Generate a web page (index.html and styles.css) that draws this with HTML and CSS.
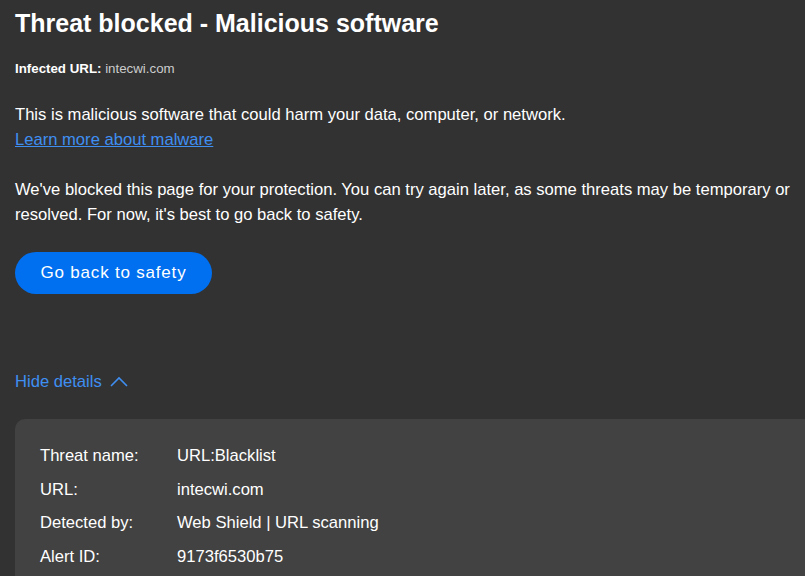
FILE: index.html
```html
<!DOCTYPE html>
<html lang="en">

<head>
    <meta charset="UTF-8">
    <meta name="viewport" content="width=device-width, initial-scale=1.0">
    <title>Threat blocked</title>
    <link rel="stylesheet" href="styles.css">
</head>

<body>
    <div class="main">
        <h1 class="title">Threat blocked - Malicious software</h1>

        <div class="infected">
            <b>Infected URL:</b> <span>intecwi.com</span>
        </div>

        <p class="text">
            This is malicious software that could harm your data, computer, or network.<br>
            <a href="#" class="learn">Learn more about malware</a>
        </p>

        <p class="text">
            We've blocked this page for your protection. You can try again later, as some threats may be temporary or
            resolved. For now, it's best to go back to safety.
        </p>

        <button class="back">Go back to safety</button>

        <a href="#" class="toggle">
            Hide details
            <svg width="18" height="12" viewBox="0 0 18 12">
                <path d="M1 10 L9 2 L17 10" fill="none" stroke="currentColor" stroke-width="1.6" />
            </svg>
        </a>

        <div class="details">
            <div class="row">
                <div class="label">Threat name:</div>
                <div class="value">URL:Blacklist</div>
            </div>
            <div class="row">
                <div class="label">URL:</div>
                <div class="value">intecwi.com</div>
            </div>
            <div class="row">
                <div class="label">Detected by:</div>
                <div class="value">Web Shield | URL scanning</div>
            </div>
            <div class="row">
                <div class="label">Alert ID:</div>
                <div class="value">9173f6530b75</div>
            </div>
        </div>
    </div>
</body>

</html>
```

FILE: styles.css
```css
html,
body {
    margin: 0;
    padding: 0;
}

:root {
    --bg: #323232;
    --panel: #424242;
    --blue: #0070f0;
    --link: #3f8ff2;
}

body {
    background: var(--bg);
    color: #ffffff;
    font-family: "Liberation Sans", Arial, sans-serif;
    height: 100vh;
    overflow: hidden;
}

.main {
    padding: 0 0 0 15px;
}

.title {
    margin: 0;
    padding-top: 6px;
    font-size: 25px;
    line-height: 34px;
    font-weight: bold;
}

.infected {
    margin-top: 21px;
    font-size: 13.3px;
    line-height: 16px;
}

.infected span {
    color: #cccccc;
}

.text {
    margin: 25px 0 0;
    font-size: 16.6px;
    line-height: 25px;
}

.learn {
    color: var(--link);
}

.back {
    margin-top: 25px;
    width: 197px;
    height: 42px;
    border: none;
    border-radius: 21px;
    background: var(--blue);
    color: #ffffff;
    font-family: inherit;
    font-size: 17px;
    letter-spacing: 0.8px;
    cursor: pointer;
}

.toggle {
    display: flex;
    align-items: center;
    margin-top: 77px;
    color: var(--link);
    text-decoration: none;
    font-size: 16.6px;
    line-height: 22px;
}

.toggle svg {
    margin-left: 8px;
}

.details {
    margin-top: 26px;
    background: var(--panel);
    border-radius: 10px 0 0 0;
    padding: 26px 25px 10px;
    font-size: 16.6px;
}

.row {
    display: flex;
    line-height: 22px;
    margin-bottom: 11.5px;
}

.label {
    width: 137px;
}
```
